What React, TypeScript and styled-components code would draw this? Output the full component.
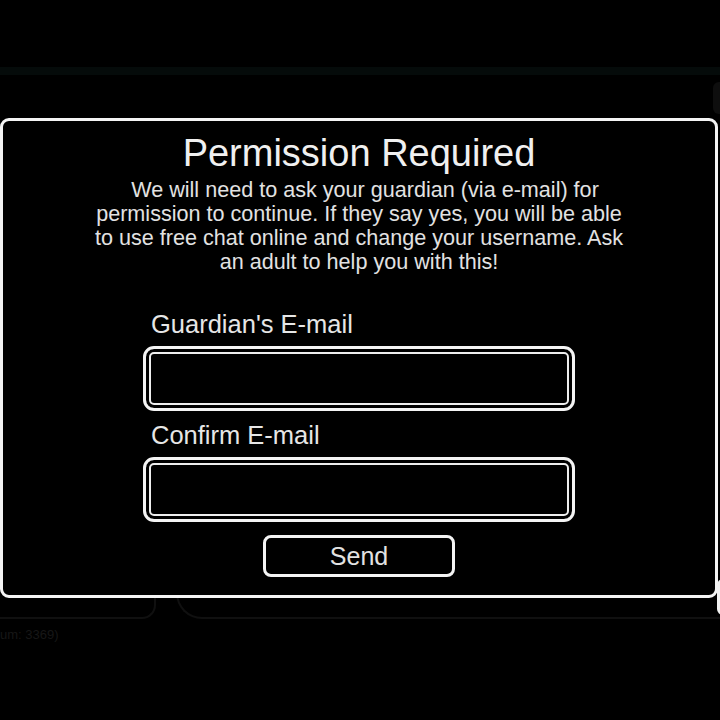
import styled, { createGlobalStyle } from "styled-components";

const GlobalStyle = createGlobalStyle`
  html, body {
    margin: 0;
    padding: 0;
    background: #000;
  }
  body {
    font-family: "Liberation Sans", Arial, sans-serif;
  }
`;

const Page = styled.div`
  position: relative;
  width: 720px;
  height: 720px;
  overflow: hidden;
  background: #000;
`;

const Backdrop = styled.div`
  display: flex;
  flex-direction: column;
  height: 100%;
`;

const TopStrip = styled.div`
  margin-top: 67px;
  height: 8px;
  background: #050b0a;
`;

const TopRow = styled.div`
  display: flex;
  justify-content: flex-end;
  margin-top: 7px;
`;

const GreyTab = styled.div`
  width: 10px;
  height: 32px;
  margin-right: -3px;
  border-radius: 6px 0 0 6px;
  background: #0e0e0e;
`;

const BottomRow = styled.div`
  display: flex;
  align-items: flex-start;
  margin-top: auto;
  height: 40px;
`;

const LeftCard = styled.div`
  width: 154px;
  height: 38px;
  border-right: 2px solid #101010;
  border-bottom: 2px solid #101010;
  border-radius: 0 0 14px 0;
`;

const RightCard = styled.div`
  flex: 1;
  height: 38px;
  margin-left: 20px;
  border-left: 2px solid #101010;
  border-bottom: 2px solid #101010;
  border-radius: 0 0 0 26px;
`;

const WhiteTab = styled.div`
  width: 6px;
  height: 36px;
  margin-left: -3px;
  margin-right: -3px;
  border-radius: 6px 0 0 6px;
  background: #f2f2f2;
`;

const BuildNote = styled.div`
  margin: 8px 0 78px 0;
  font-size: 13px;
  color: #171717;
`;

const Modal = styled.div`
  position: absolute;
  top: 118px;
  left: 0;
  width: 712px;
  height: 462px;
  border: 3px solid #f4f4f4;
  border-radius: 9px;
  background: #000;
  display: flex;
  flex-direction: column;
  align-items: center;
  padding-top: 12px;
  box-sizing: content-box;
  color: #ececec;
`;

const Title = styled.h1`
  margin: 0;
  font-size: 38px;
  line-height: 40px;
  font-weight: 400;
  color: #f0f0f0;
`;

const Message = styled.p`
  margin: 5px 0 0;
  display: flex;
  flex-direction: column;
  align-items: center;
  font-size: 21.6px;
  line-height: 24px;
  color: #e2e2e2;
`;

const MessageLine = styled.span<{ $indent?: number }>`
  padding-left: ${p => p.$indent ?? 0}px;
  white-space: nowrap;
`;

const Form = styled.div`
  display: flex;
  flex-direction: column;
  width: 432px;
  margin-top: 36px;
`;

const Label = styled.label<{ $gap?: number }>`
  margin-top: ${p => p.$gap ?? 0}px;
  padding-left: 8px;
  font-size: 25.5px;
  line-height: 28px;
  color: #e6e6e6;
`;

const Field = styled.div`
  margin-top: 8px;
  height: 59px;
  border: 3px solid #f4f4f4;
  border-radius: 11px;
  box-shadow: inset 0 0 0 3px #000, inset 0 0 0 5px #eeeeee;
`;

const SendButton = styled.button`
  align-self: center;
  margin-top: 13px;
  width: 192px;
  height: 42px;
  border: 3px solid #f4f4f4;
  border-radius: 8px;
  background: #000;
  color: #e2e2e2;
  font-family: "Liberation Sans", Arial, sans-serif;
  font-size: 25px;
  padding: 0;
`;

export default function App() {
  return (
    <>
      <GlobalStyle />
      <Page>
        <Backdrop>
          <TopStrip />
          <TopRow>
            <GreyTab />
          </TopRow>
          <BottomRow>
            <LeftCard />
            <RightCard />
            <WhiteTab />
          </BottomRow>
          <BuildNote>um: 3369)</BuildNote>
        </Backdrop>
        <Modal>
          <Title>Permission Required</Title>
          <Message>
            <MessageLine $indent={12}>We will need to ask your guardian (via e-mail) for</MessageLine>
            <MessageLine>permission to continue. If they say yes, you will be able</MessageLine>
            <MessageLine>to use free chat online and change your username. Ask</MessageLine>
            <MessageLine>an adult to help you with this!</MessageLine>
          </Message>
          <Form>
            <Label>Guardian's E-mail</Label>
            <Field />
            <Label $gap={10}>Confirm E-mail</Label>
            <Field />
            <SendButton>Send</SendButton>
          </Form>
        </Modal>
      </Page>
    </>
  );
}
